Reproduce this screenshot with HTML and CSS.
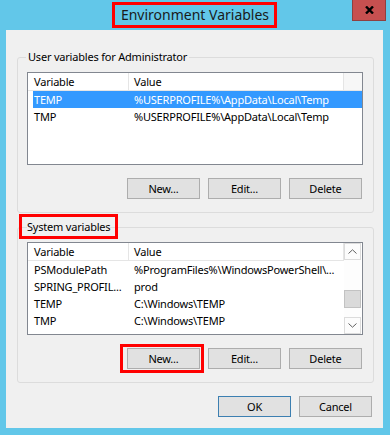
FILE: index.html
```html
<!DOCTYPE html>
<html lang="en">
<head>
    <meta charset="UTF-8">
    <title>Environment Variables</title>
    <link rel="stylesheet" href="styles.css">
</head>
<body>
    <div class="window">
        <div class="titlebar">
            <span class="title mark">Environment Variables</span>
            <button class="close" title="Close">
                <svg width="9" height="8" viewBox="0 0 9 8"><path d="M1 0.5 L8 7.5 M8 0.5 L1 7.5" stroke="#000" stroke-width="2.4" fill="none"/></svg>
            </button>
        </div>
        <div class="client">
            <fieldset class="group">
                <legend>User variables for Administrator</legend>
                <div class="list">
                    <div class="list-body">
                        <div class="head"><span>Variable</span><span>Value</span><span class="filler"></span></div>
                        <div class="row selected"><span>TEMP</span><span>%USERPROFILE%\AppData\Local\Temp</span></div>
                        <div class="row"><span>TMP</span><span>%USERPROFILE%\AppData\Local\Temp</span></div>
                    </div>
                </div>
                <div class="buttons">
                    <button class="btn">New...</button>
                    <button class="btn">Edit...</button>
                    <button class="btn">Delete</button>
                </div>
            </fieldset>

            <fieldset class="group second">
                <legend><span class="mark legend-mark">System variables</span></legend>
                <div class="list">
                    <div class="list-body">
                        <div class="head"><span>Variable</span><span>Value</span></div>
                        <div class="row"><span>PSModulePath</span><span>%ProgramFiles%\WindowsPowerShell\...</span></div>
                        <div class="row"><span>SPRING_PROFIL...</span><span>prod</span></div>
                        <div class="row"><span>TEMP</span><span>C:\Windows\TEMP</span></div>
                        <div class="row"><span>TMP</span><span>C:\Windows\TEMP</span></div>
                        <div class="row"><span>&nbsp;</span><span>i,&nbsp;&nbsp;&nbsp;&nbsp;&nbsp;,,</span></div>
                    </div>
                    <div class="scrollbar">
                        <div class="arrow">
                            <svg width="9" height="5" viewBox="0 0 9 5"><path d="M0.5 4.5 L4.5 0.8 L8.5 4.5" stroke="#606060" fill="none"/></svg>
                        </div>
                        <div class="track">
                            <div class="thumb"></div>
                        </div>
                        <div class="arrow">
                            <svg width="9" height="5" viewBox="0 0 9 5"><path d="M0.5 0.5 L4.5 4.2 L8.5 0.5" stroke="#606060" fill="none"/></svg>
                        </div>
                    </div>
                </div>
                <div class="buttons">
                    <button class="btn mark btn-mark">New...</button>
                    <button class="btn">Edit...</button>
                    <button class="btn">Delete</button>
                </div>
            </fieldset>

            <div class="buttons dialog-buttons">
                <button class="btn default">OK</button>
                <button class="btn">Cancel</button>
            </div>
        </div>
    </div>
</body>
</html>
```

FILE: styles.css
```css
html, body {
    margin: 0;
    height: 100%;
}
body {
    background-color: #62c7e9;
    font-family: "Noto Sans", sans-serif;
    font-size: 11px;
    letter-spacing: -0.2px;
    color: #000;
}
.window {
    width: 390px;
    height: 435px;
}

/* title bar */
.titlebar {
    position: relative;
    height: 30px;
    display: flex;
    justify-content: center;
    align-items: center;
}
.title {
    font-size: 14px;
    letter-spacing: 0;
    line-height: 20px;
    color: #1a1a1a;
}
.close {
    position: absolute;
    top: 0;
    right: 4px;
    width: 34px;
    height: 21px;
    padding: 0;
    border: 1px solid #8f4040;
    border-top: none;
    background-color: #c75050;
    display: flex;
    justify-content: center;
    align-items: center;
}

/* red annotation boxes */
.mark {
    position: relative;
}
.mark::after {
    content: "";
    position: absolute;
    border: 3px solid #ff0000;
    pointer-events: none;
}
.title.mark::after {
    inset: -3px -8px -3px -9px;
}
.legend-mark::after {
    inset: -5px -8px -5px -8px;
}
.btn-mark::after {
    inset: -5px -5px -5px -8px;
}

/* client area */
.client {
    background-color: #f0f0f0;
    margin: 0 7px 0 6px;
    height: 398px;
    overflow: hidden;
}
.group {
    margin: 19px 9px 0 11px;
    padding: 7px 10px 13px 9px;
    border: 1px solid #dcdcdc;
    border-radius: 3px;
    min-width: 0;
}
.group.second {
    margin-top: 6px;
}
.group legend {
    padding: 0 2px;
    margin-left: -1px;
    line-height: 16px;
}
.group.second legend {
    margin-left: 0;
    padding: 0;
}

/* list view */
.list {
    height: 91px;
    border: 1px solid #828790;
    background-color: #fff;
    display: flex;
    overflow: hidden;
}
.list-body {
    flex: 1;
    overflow: hidden;
}
.head {
    display: grid;
    grid-template-columns: 101px 215px 1fr;
    height: 17px;
    line-height: 17px;
    border-bottom: 1px solid #e5e5e5;
}
.head span {
    border-right: 1px solid #e5e5e5;
    padding-left: 6px;
    white-space: nowrap;
}
.head span:nth-child(2) {
    padding-left: 5px;
}
.head .filler {
    border-right: none;
    background-color: #f7f7f7;
}
.row {
    display: grid;
    grid-template-columns: 95px 216px;
    margin-left: 5px;
    height: 17px;
    line-height: 17px;
    white-space: nowrap;
}
.row span {
    padding-left: 1px;
    overflow: hidden;
}
.row span:nth-child(2) {
    padding-left: 6px;
}
.row.selected {
    background-color: #3399ff;
    color: #fff;
}

/* scroll bar */
.scrollbar {
    width: 17px;
    margin-right: 1px;
    display: flex;
    flex-direction: column;
    background-color: #f0f0f0;
}
.arrow {
    height: 15px;
    border: 1px solid #dcdcdc;
    background-color: #fcfcfc;
    display: flex;
    justify-content: center;
    align-items: center;
}
.track {
    flex: 1;
    padding-top: 30px;
    background-color: #fdfdfd;
}
.thumb {
    height: 16px;
    border: 1px solid #c2c2c2;
    background-color: #dadada;
}

/* buttons */
.buttons {
    display: flex;
    justify-content: flex-end;
    gap: 8px;
    margin-top: 13px;
    padding-right: 1px;
}
.btn {
    width: 73px;
    height: 21px;
    padding: 0;
    font-family: "Noto Sans", sans-serif;
    font-size: 11px;
    letter-spacing: -0.2px;
    color: #000;
    background-color: #e1e1e1;
    border: 1px solid #adadad;
}
.btn.default {
    border-color: #3c7fb1;
}
.dialog-buttons {
    margin-right: 10px;
}
```
